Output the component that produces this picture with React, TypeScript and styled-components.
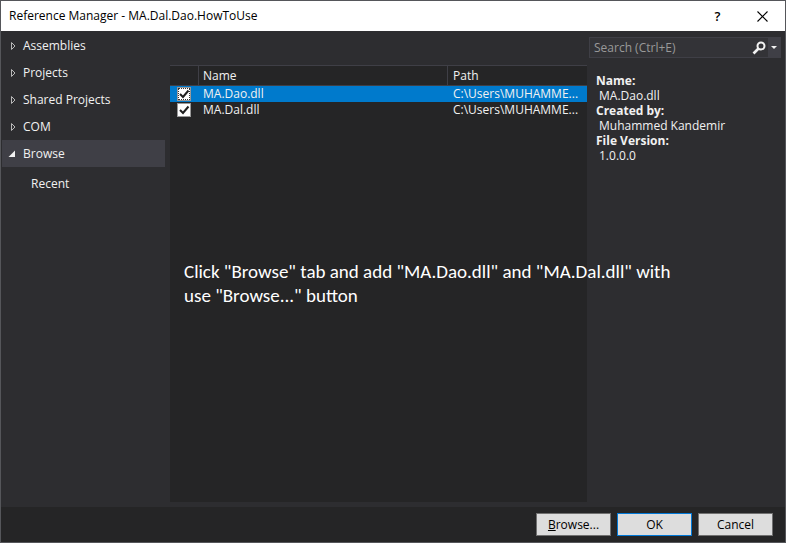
import React, { useState } from "react";
import styled, { createGlobalStyle } from "styled-components";

const GlobalStyle = createGlobalStyle`
  *, *::before, *::after { box-sizing: border-box; }
  html, body, #root { height: 100%; margin: 0; }
  body, button, input, table {
    font-family: "Open Sans", "Noto Sans", sans-serif;
    font-size: 12px;
    line-height: 16px;
  }
`;

const Dialog = styled.main`
  display: flex;
  flex-direction: column;
  min-height: 100vh;
  border: 1px solid #55565a;
  background: #2d2d30;
  color: #f1f1f1;
`;

const TitleBar = styled.header`
  display: flex;
  align-items: center;
  height: 30px;
  padding-left: 8px;
  background: #fff;
  color: #000;
`;

const Title = styled.h1`
  flex: 1;
  margin: 0;
  font-size: 12px;
  font-weight: 400;
`;

const CaptionButton = styled.button`
  display: grid;
  place-items: center;
  width: 45px;
  height: 30px;
  padding: 0;
  border: 0;
  background: transparent;
  color: #000;
  font-size: 13px;
  font-weight: 600;
`;

const Body = styled.div`
  position: relative;
  display: flex;
  flex: 1;
`;

const Sidebar = styled.nav`
  width: 169px;
  padding: 1px 5px 0 1px;
`;

const SidebarItem = styled.button<{ $selected?: boolean }>`
  display: flex;
  align-items: center;
  gap: 6px;
  width: 100%;
  height: 27px;
  padding: 0 6px;
  border: 0;
  background: ${(p) => (p.$selected ? "#3f3f46" : "transparent")};
  color: #f1f1f1;
  text-align: left;
`;

const SidebarChild = styled.a`
  display: block;
  padding: 9px 0 9px 29px;
  color: #f1f1f1;
  text-decoration: none;
`;

const ListPane = styled.section`
  flex: 1;
  min-width: 0;
  margin: 34px 0 5px;
  background: #252526;
`;

const Table = styled.table`
  width: 100%;
  table-layout: fixed;
  border-collapse: separate;
  border-spacing: 0;
`;

const CheckCol = styled.col`
  width: 28px;
`;

const PathCol = styled.col`
  width: 140px;
`;

const HeadCell = styled.th`
  height: 21px;
  padding: 0 5px;
  border-top: 1px solid #3f3f46;
  border-bottom: 1px solid #3f3f46;
  font-weight: 400;
  text-align: left;

  & + & {
    border-left: 1px solid #3f3f46;
    padding-left: 4px;
  }

  & + & + & {
    padding-left: 5px;
  }
`;

const Row = styled.tr<{ $selected: boolean }>`
  background: ${(p) => (p.$selected ? "#007acc" : "transparent")};
`;

const Cell = styled.td`
  height: 16px;
  padding: 0 5px;
  overflow: hidden;
  white-space: nowrap;
`;

const CheckCell = styled(Cell)`
  padding: 0 0 0 7px;
`;

const PathCell = styled(Cell)`
  padding: 0 0 0 6px;
`;

const CheckLabel = styled.label`
  display: grid;
  width: 14px;
  height: 14px;

  & > * { grid-area: 1 / 1; }
`;

const CheckInput = styled.input<{ $focused: boolean }>`
  appearance: none;
  width: 14px;
  height: 14px;
  margin: 0;
  border: 1px solid #999;
  outline: ${(p) => (p.$focused ? "1px dotted #333" : "none")};
  outline-offset: -2px;
  background: #fefefe;
`;

const CheckMark = styled.svg`
  width: 14px;
  height: 14px;
  pointer-events: none;
`;

const Details = styled.aside`
  width: 198px;
  padding: 6px 4px 0 2px;
`;

const SearchBox = styled.div`
  display: flex;
  height: 21px;
  border: 1px solid #3f3f46;
  background: #333337;
`;

const SearchInput = styled.input`
  flex: 1;
  min-width: 0;
  padding: 0 4px;
  border: 0;
  outline: 0;
  background: transparent;
  color: #f1f1f1;

  &::placeholder { color: #999; opacity: 1; }
`;

const SearchButton = styled.button<{ $menu?: boolean }>`
  display: grid;
  place-items: center;
  width: ${(p) => (p.$menu ? "12px" : "18px")};
  padding: 0;
  border: 0;
  background: ${(p) => (p.$menu ? "#3f3f46" : "transparent")};
`;

const Facts = styled.dl`
  margin: 15px 0 0 7px;
  line-height: 15px;
`;

const FactName = styled.dt`
  font-weight: 700;
`;

const FactValue = styled.dd`
  margin: 0 0 0 3px;
`;

const Callout = styled.p`
  position: absolute;
  top: 229px;
  left: 183px;
  width: 500px;
  margin: 0;
  color: #fff;
  font-family: Carlito, Lato, sans-serif;
  font-size: 19px;
  line-height: 24px;
  pointer-events: none;
`;

const Footer = styled.footer`
  display: flex;
  justify-content: flex-end;
  gap: 6px;
  padding: 6px 12px;
  background: #252526;
`;

const ActionButton = styled.button<{ $primary?: boolean }>`
  width: 75px;
  height: 23px;
  padding: 0;
  border: 1px solid ${(p) => (p.$primary ? "#0078d7" : "#707070")};
  background: #ddd;
  color: #000;
`;

const Expander = ({ open }: { open: boolean }) => (
  <svg width="9" height="10" viewBox="0 0 9 10" aria-hidden="true">
    {open ? (
      <path d="M7 1.5V8H.5z" fill="#f1f1f1" />
    ) : (
      <path d="M3.5 1.5v7L7 5z" fill="none" stroke="#b8b8b8" />
    )}
  </svg>
);

const groups = ["Assemblies", "Projects", "Shared Projects", "COM", "Browse"];
const files = ["MA.Dao.dll", "MA.Dal.dll"];
const facts = [
  ["Name:", "MA.Dao.dll"],
  ["Created by:", "Muhammed Kandemir"],
  ["File Version:", "1.0.0.0"],
];

export default function App() {
  const [group, setGroup] = useState("Browse");
  const [selected, setSelected] = useState("MA.Dao.dll");

  return (
    <>
      <GlobalStyle />
      <Dialog>
        <TitleBar>
          <Title>Reference Manager - MA.Dal.Dao.HowToUse</Title>
          <CaptionButton aria-label="Help">?</CaptionButton>
          <CaptionButton aria-label="Close">
            <svg width="11" height="11" viewBox="0 0 11 11" aria-hidden="true">
              <path d="M.5.5l10 10M10.5.5l-10 10" stroke="#000" strokeWidth="1.1" />
            </svg>
          </CaptionButton>
        </TitleBar>
        <Body>
          <Sidebar aria-label="Reference sources">
            {groups.map((name) => (
              <SidebarItem
                key={name}
                $selected={name === group}
                aria-expanded={name === group}
                onClick={() => setGroup(name)}
              >
                <Expander open={name === group} />
                {name}
              </SidebarItem>
            ))}
            <SidebarChild href="#recent">Recent</SidebarChild>
          </Sidebar>
          <ListPane>
            <Table>
              <colgroup>
                <CheckCol />
                <col />
                <PathCol />
              </colgroup>
              <thead>
                <tr>
                  <HeadCell aria-label="Included" />
                  <HeadCell>Name</HeadCell>
                  <HeadCell>Path</HeadCell>
                </tr>
              </thead>
              <tbody>
                {files.map((file) => (
                  <Row key={file} $selected={file === selected} onClick={() => setSelected(file)}>
                    <CheckCell>
                      <CheckLabel>
                        <CheckInput
                          type="checkbox"
                          defaultChecked
                          aria-label={file}
                          $focused={file === selected}
                        />
                        <CheckMark viewBox="0 0 14 14" aria-hidden="true">
                          <path d="M3 7l3 3 5.5-6.5" fill="none" stroke="#1e1e1e" strokeWidth="2" />
                        </CheckMark>
                      </CheckLabel>
                    </CheckCell>
                    <Cell>{file}</Cell>
                    <PathCell>C:\Users\MUHAMME...</PathCell>
                  </Row>
                ))}
              </tbody>
            </Table>
          </ListPane>
          <Details>
            <SearchBox>
              <SearchInput aria-label="Search" placeholder="Search (Ctrl+E)" />
              <SearchButton aria-label="Search">
                <svg width="14" height="14" viewBox="0 0 14 14" aria-hidden="true">
                  <circle cx="9" cy="5" r="3.5" fill="none" stroke="#f1f1f1" strokeWidth="2" />
                  <path d="M6.5 7.5L1.5 12.5" stroke="#f1f1f1" strokeWidth="2.6" />
                </svg>
              </SearchButton>
              <SearchButton $menu aria-label="Search options">
                <svg width="6" height="3" viewBox="0 0 6 3" aria-hidden="true">
                  <path d="M0 0h6L3 3z" fill="#f1f1f1" />
                </svg>
              </SearchButton>
            </SearchBox>
            <Facts>
              {facts.map(([name, value]) => (
                <React.Fragment key={name}>
                  <FactName>{name}</FactName>
                  <FactValue>{value}</FactValue>
                </React.Fragment>
              ))}
            </Facts>
          </Details>
          <Callout>
            Click "Browse" tab and add "MA.Dao.dll" and "MA.Dal.dll" with use "Browse..." button
          </Callout>
        </Body>
        <Footer>
          <ActionButton>
            <u>B</u>rowse...
          </ActionButton>
          <ActionButton $primary>OK</ActionButton>
          <ActionButton>Cancel</ActionButton>
        </Footer>
      </Dialog>
    </>
  );
}
